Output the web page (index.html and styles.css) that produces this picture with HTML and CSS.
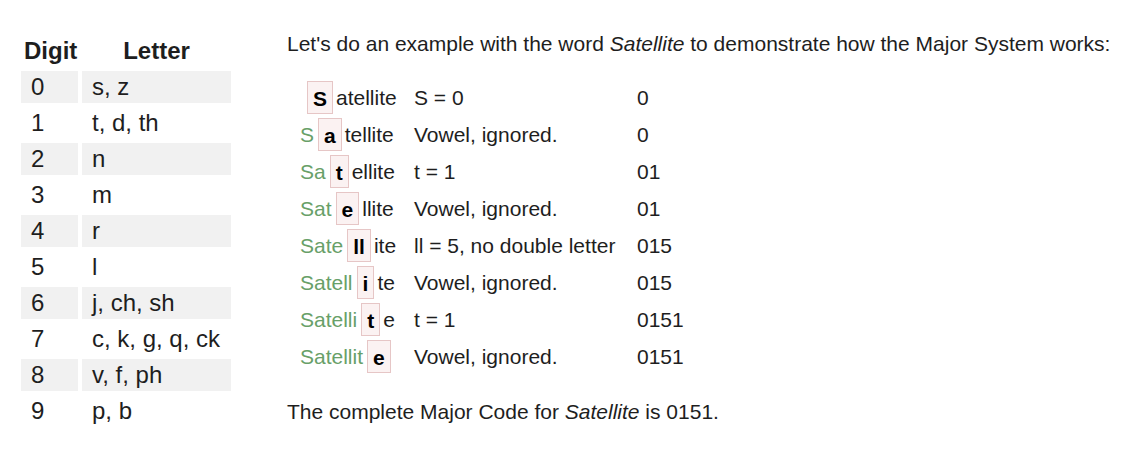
FILE: index.html
```html
<!DOCTYPE html>
<html>
<head>
<meta charset="utf-8">
<link rel="stylesheet" href="styles.css">
</head>
<body>
<div class="page">
  <table class="codes">
    <thead>
      <tr><th class="c-digit">Digit</th><th class="c-letter">Letter</th></tr>
    </thead>
    <tbody>
      <tr><td>0</td><td>s, z</td></tr>
      <tr><td>1</td><td>t, d, th</td></tr>
      <tr><td>2</td><td>n</td></tr>
      <tr><td>3</td><td>m</td></tr>
      <tr><td>4</td><td>r</td></tr>
      <tr><td>5</td><td>l</td></tr>
      <tr><td>6</td><td>j, ch, sh</td></tr>
      <tr><td>7</td><td>c, k, g, q, ck</td></tr>
      <tr><td>8</td><td>v, f, ph</td></tr>
      <tr><td>9</td><td>p, b</td></tr>
    </tbody>
  </table>

  <div class="example">
    <p class="intro">Let's do an example with the word <em>Satellite</em> to demonstrate how the Major System works:</p>
    <div class="steps">
      <div class="word"><span class="cur first">S</span><span class="rest">atellite</span></div>
      <div class="rule">S = 0</div>
      <div class="code">0</div>

      <div class="word"><span class="done">S</span><span class="cur">a</span><span class="rest">tellite</span></div>
      <div class="rule">Vowel, ignored.</div>
      <div class="code">0</div>

      <div class="word"><span class="done">Sa</span><span class="cur">t</span><span class="rest">ellite</span></div>
      <div class="rule">t = 1</div>
      <div class="code">01</div>

      <div class="word"><span class="done">Sat</span><span class="cur">e</span><span class="rest">llite</span></div>
      <div class="rule">Vowel, ignored.</div>
      <div class="code">01</div>

      <div class="word"><span class="done">Sate</span><span class="cur">ll</span><span class="rest">ite</span></div>
      <div class="rule">ll = 5, no double letter</div>
      <div class="code">015</div>

      <div class="word"><span class="done">Satell</span><span class="cur">i</span><span class="rest">te</span></div>
      <div class="rule">Vowel, ignored.</div>
      <div class="code">015</div>

      <div class="word"><span class="done">Satelli</span><span class="cur">t</span><span class="rest">e</span></div>
      <div class="rule">t = 1</div>
      <div class="code">0151</div>

      <div class="word"><span class="done">Satellit</span><span class="cur">e</span></div>
      <div class="rule">Vowel, ignored.</div>
      <div class="code">0151</div>
    </div>
    <p class="summary">The complete Major Code for <em>Satellite</em> is 0151.</p>
  </div>
</div>
</body>
</html>
```

FILE: styles.css
```css
html, body {
  margin: 0;
  padding: 0;
  background: #ffffff;
}

body {
  font-family: "Liberation Sans", Arial, sans-serif;
  font-size: 21px;
  color: #1e1e1e;
}

.page {
  display: flex;
  align-items: flex-start;
  padding: 31px 0 0 17px;
}

.codes {
  border-collapse: separate;
  border-spacing: 4px;
  flex: none;
  font-size: 24px;
}

.codes th,
.codes td {
  height: 32px;
  padding: 0 10px;
  box-sizing: border-box;
  line-height: 26px;
  white-space: nowrap;
}

.codes th {
  font-weight: 700;
  padding: 0;
}

.codes .c-digit {
  width: 57px;
  padding-left: 3px;
  text-align: left;
}

.codes .c-letter {
  width: 149px;
  text-align: center;
}

.codes td {
  text-align: left;
}

.codes tbody tr:nth-child(odd) td {
  background: #f1f1f1;
}

.example {
  margin-left: 52px;
}

.intro {
  margin: 1px 0 0 0;
  line-height: 24px;
  white-space: nowrap;
}

.steps {
  display: grid;
  grid-template-columns: 114px 223px auto;
  grid-auto-rows: 37px;
  align-items: center;
  margin: 23px 0 0 13px;
}

.word {
  display: flex;
  align-items: center;
  white-space: nowrap;
}

.rule {
  white-space: nowrap;
}

.done {
  color: #68a068;
}

.cur {
  display: inline-block;
  height: 31px;
  line-height: 33px;
  padding: 0 5px;
  margin: 0 3px 0 4px;
  background: #fbf2f2;
  border: 1px solid #e6c6c6;
  font-weight: 700;
  color: #000;
}

.cur.first {
  margin-left: 7px;
}

.summary {
  margin: 25px 0 0 0;
  line-height: 24px;
}

em {
  font-style: italic;
}
```
